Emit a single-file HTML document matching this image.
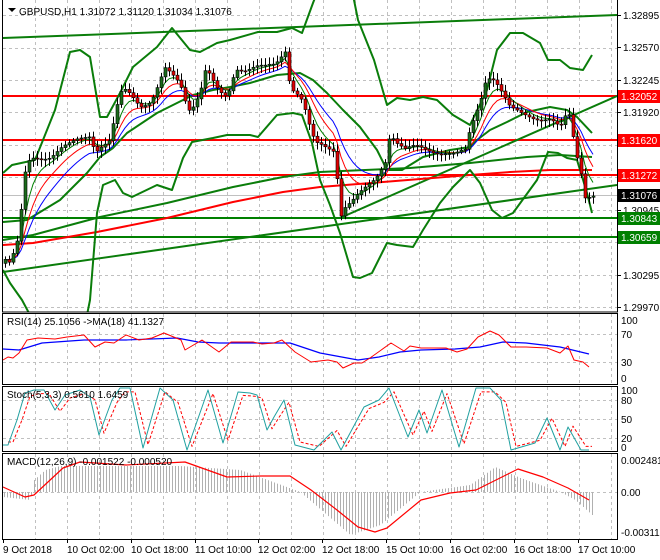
<!DOCTYPE html>
<html><head><meta charset="utf-8"><style>
body{margin:0;background:#fff;width:660px;height:560px;overflow:hidden}
svg{display:block;font-family:"Liberation Sans",sans-serif;font-size:10px}
</style></head><body>
<svg id="s" width="660" height="560" xmlns="http://www.w3.org/2000/svg">
<rect width="660" height="560" fill="#fff"/>
<g id="grid" stroke="#c0c0c0" stroke-dasharray="3,3" stroke-width="1"></g>
<svg x="0" y="0" width="617" height="312" overflow="hidden"><g id="main"></g></svg>
<g id="sub"></g>
<g fill="none" stroke="#000" stroke-width="1">
<rect x="2.5" y="-1" width="615" height="313"/>
<rect x="2.5" y="313.5" width="615" height="71"/>
<rect x="2.5" y="386.5" width="615" height="65"/>
<rect x="2.5" y="453.5" width="615" height="86"/>
</g>
<g id="axis" fill="#000"></g>
<path d="M8 8 L16 8 L12 12 Z" fill="#000"/>
<text x="19" y="15" fill="#000">GBPUSD,H1  1.31072 1.31120 1.31034 1.31076</text>
<text x="7" y="325" fill="#000">RSI(14) 25.1056  -&gt;MA(18) 41.1327</text>
<text x="7" y="398" fill="#000">Stoch(5,3,3) 0.5610 1.6459</text>
<text x="7" y="465" fill="#000">MACD(12,26,9) -0.001522 -0.000520</text>
</svg>
<script>
var NS="http://www.w3.org/2000/svg";
function el(p,t,a,txt){var e=document.createElementNS(NS,t);for(var k in a)e.setAttribute(k,a[k]);if(txt!=null)e.textContent=txt;p.appendChild(e);return e;}
var G=document.getElementById('grid'),M=document.getElementById('main'),U=document.getElementById('sub'),A=document.getElementById('axis');
for(var x=35;x<617;x+=32){[[0,312],[314,384],[387,451],[454,539]].forEach(function(r){el(G,'line',{x1:x+.5,x2:x+.5,y1:r[0],y2:r[1]});});}
[15,47.5,80,112,145,177,210,242,275,307].forEach(function(y){el(G,'line',{x1:3,x2:617,y1:Math.round(y)+.5,y2:Math.round(y)+.5});});
[334,362,400,419,438,492].forEach(function(y){el(G,'line',{x1:3,x2:617,y1:y+.5,y2:y+.5});});
function pl(p,pts,c,w,extra){var a={points:pts.map(function(q){return q.join(',')}).join(' '),fill:'none',stroke:c,'stroke-width':w,'stroke-linejoin':'round'};for(var k in extra)a[k]=extra[k];return el(p,'polyline',a);}
var P=[[3,255],[10,262],[18,240],[25,175],[30,160],[40,158],[50,155],[60,148],[70,145],[80,140],[90,135],[95,150],[100,145],[110,140],[115,115],[120,95],[125,92],[130,95],[140,105],[150,100],[155,92],[160,80],[165,70],[170,75],[175,80],[180,85],[185,100],[190,110],[195,100],[200,90],[205,70],[210,75],[215,88],[220,95],[225,98],[230,90],[235,68],[245,68],[255,66],[265,68],[275,66],[285,50],[290,85],[295,90],[300,95],[305,110],[310,130],[315,145],[325,148],[335,150],[340,215],[345,205],[355,198],[365,190],[375,180],[385,160],[390,130],[395,140],[405,150],[415,148],[430,150],[445,152],[455,155],[465,152],[470,130],[475,115],[480,100],[485,80],[490,75],[495,80],[500,90],[510,110],[520,113],[530,115],[540,118],[550,120],[560,130],[565,118],[570,115],[575,150],[580,165],[585,195],[590,195]];
function interp(pts,x){for(var i=1;i<pts.length;i++){if(x<=pts[i][0]){var a=pts[i-1],b=pts[i];return a[1]+(b[1]-a[1])*(x-a[0])/(b[0]-a[0]);}}return pts[pts.length-1][1];}
el(M,'line',{x1:3,x2:617,y1:195.5,y2:195.5,stroke:'#c0c0c0','stroke-width':1});
[96,140,175].forEach(function(y){el(M,'line',{x1:3,x2:617,y1:y,y2:y,stroke:'#ff0000','stroke-width':2});});
[218,237].forEach(function(y){el(M,'line',{x1:3,x2:617,y1:y,y2:y,stroke:'#008000','stroke-width':2});});
var g='#0a7d0a';
el(M,'line',{x1:3,x2:617,y1:38,y2:15,stroke:g,'stroke-width':2});
el(M,'line',{x1:3,x2:617,y1:272,y2:185,stroke:g,'stroke-width':2});
el(M,'line',{x1:340,x2:617,y1:218,y2:96,stroke:g,'stroke-width':2});
pl(M,[[3,240],[33,235],[100,217],[167,203],[233,187],[283,177],[320,172],[410,168],[470,163],[527,157],[560,155],[592,157]],g,2);
pl(M,[[3,245],[33,243],[97,232],[167,218],[233,202],[283,192],[320,187],[383,182],[470,175],[510,172],[550,170],[592,170]],'#ff0000',2);
pl(M,[[3,173],[12,165],[35,160],[55,110],[70,52],[80,50],[90,57],[100,117],[107,117],[120,93],[133,67],[157,47],[172,28],[190,50],[200,52],[217,43],[230,40],[258,32],[277,32],[292,28],[302,33],[313,3],[320,-15],[340,-25],[352,-10],[358,20],[374,60],[387,105],[397,98],[410,100],[423,97],[437,100],[453,115],[470,125],[487,90],[497,50],[510,33],[523,33],[540,43],[548,60],[560,60],[570,68],[583,70],[592,55]],g,2);
pl(M,[[3,222],[27,220],[60,200],[87,173],[100,157],[113,148],[127,133],[157,113],[177,103],[193,95],[213,90],[230,87],[250,83],[277,75],[300,73],[313,80],[327,93],[343,110],[360,127],[377,150],[387,170],[402,170],[423,157],[450,150],[470,147],[477,140],[490,130],[507,122],[527,112],[550,107],[567,110],[577,117],[592,133]],g,2);
pl(M,[[3,270],[10,283],[22,300],[30,315]],g,2);
pl(M,[[86,320],[90,300],[97,213],[103,185],[115,180],[123,193],[132,197],[157,185],[172,190],[183,158],[192,142],[213,138],[227,135],[250,135],[258,137],[277,115],[293,113],[302,115],[312,143],[320,180],[330,205],[340,233],[353,277],[360,278],[372,273],[387,243],[397,245],[413,247],[423,230],[440,203],[453,187],[470,170],[480,183],[492,210],[502,218],[513,213],[537,180],[548,152],[558,153],[567,158],[577,160],[587,193],[592,213]],g,2);
var closes=[],xs=[];for(var x=5;x<=593;x+=4){xs.push(x);closes.push(interp(P,x)+Math.sin(x*1.7)*3);}
function ema(n){var k=2/(n+1),r=[],v=closes[0];closes.forEach(function(c){v=v+k*(c-v);r.push([xs[r.length],v]);});return r;}
pl(M,ema(14),'#0000ff',1);pl(M,ema(9),'#ff0000',1);pl(M,ema(5),'#008000',1);
var prev=closes[0]+4;
xs.forEach(function(x,i){var c=closes[i],o=prev;prev=c;var top=Math.min(o,c),bot=Math.max(o,c);if(bot-top<1)bot=top+1;
 var h=top-2-Math.abs(Math.sin(x*3.1))*5,l=bot+2+Math.abs(Math.cos(x*2.3))*5;
 el(M,'line',{x1:x+.5,x2:x+.5,y1:h,y2:l,stroke:'#000','stroke-width':1});
 el(M,'rect',{x:x-1,y:top,width:3,height:bot-top,fill:c<o?'#1a6b1a':'#e00000',stroke:'#000','stroke-width':.6});});
[[15,'1.32895'],[47,'1.32570'],[80,'1.32245'],[112,'1.31920'],[210,'1.30945'],[275,'1.30295'],[307,'1.29970']].forEach(function(a){el(A,'line',{x1:617,x2:621,y1:a[0]+.5,y2:a[0]+.5,stroke:'#000'});el(A,'text',{x:623,y:a[0]+4},a[1]);});
[[96,'1.32052','#ff0000'],[140,'1.31620','#ff0000'],[175,'1.31272','#ff0000'],[195,'1.31076','#000'],[218,'1.30843','#008000'],[237,'1.30659','#008000']].forEach(function(a){el(A,'rect',{x:618,y:a[0]-6,width:42,height:13,fill:a[2]});el(A,'text',{x:621,y:a[0]+4,fill:'#fff'},a[1]);});
[[320,'100'],[334,'70'],[362,'30'],[378,'0'],[390,'100'],[400,'80'],[419,'50'],[438,'20'],[447,'0'],[460,'0.002481'],[492,'0.00'],[532,'-0.003115']].forEach(function(a){el(A,'text',{x:621,y:a[0]+4},a[1]);});
pl(U,[[3,349],[19,350],[42,343],[84,340],[126,340],[177,338],[198,342],[219,343],[253,343],[290,343],[320,353],[358,360],[379,357],[400,352],[421,350],[455,349],[480,347],[503,342],[526,343],[560,347],[589,354]],'#0000ff',1.2);
pl(U,[[3,360],[8,357],[13,358],[19,353],[27,340],[38,338],[55,339],[67,337],[84,335],[95,347],[105,342],[114,343],[126,335],[139,340],[152,338],[164,333],[181,340],[185,350],[202,340],[219,352],[231,342],[253,342],[262,344],[274,343],[282,340],[295,352],[311,362],[328,360],[337,362],[343,368],[354,363],[362,363],[370,358],[391,343],[404,351],[410,346],[421,348],[446,348],[457,352],[467,349],[478,337],[490,331],[499,335],[511,347],[526,347],[547,348],[560,353],[568,346],[574,360],[583,362],[589,367]],'#ff0000',1);
var st=[[3,445],[8,445],[17,420],[25,393],[34,390],[44,390],[55,410],[65,395],[80,390],[90,397],[99,435],[112,400],[120,388],[130,388],[143,448],[160,388],[173,400],[187,450],[208,390],[223,443],[238,392],[250,393],[257,395],[267,430],[274,417],[284,400],[295,445],[314,450],[332,432],[341,450],[364,407],[379,400],[389,388],[408,437],[419,410],[427,433],[442,390],[459,447],[476,388],[490,388],[501,400],[511,450],[535,443],[547,418],[560,450],[568,427],[581,450],[589,450]];
pl(U,st.map(function(p){return [Math.min(p[0]+5,592),p[1]+(420-p[1])*0.12];}),'#ff0000',1,{'stroke-dasharray':'3,2'});
pl(U,st,'#20a0a0',1);
var H=[[3,497],[30,500],[34,480],[45,470],[60,466],[180,466],[240,470],[300,492],[350,535],[380,525],[420,492],[470,485],[495,467],[520,478],[560,492],[575,500],[592,515]];
for(var x=4;x<=592;x+=3){var v=interp(H,x);el(U,'line',{x1:x+.5,x2:x+.5,y1:492,y2:v,stroke:'#b0b0b0','stroke-width':1});}
pl(U,[[3,487],[25,497],[34,495],[63,468],[80,462],[126,465],[185,462],[227,477],[261,476],[290,476],[311,490],[337,510],[358,527],[375,532],[387,528],[421,500],[450,493],[476,490],[518,469],[543,477],[568,488],[589,500]],'#ff0000',1.2);
[[3,'9 Oct 2018'],[67,'10 Oct 02:00'],[131,'10 Oct 18:00'],[195,'11 Oct 10:00'],[258,'12 Oct 02:00'],[322,'12 Oct 18:00'],[386,'15 Oct 10:00'],[450,'16 Oct 02:00'],[514,'16 Oct 18:00'],[578,'17 Oct 10:00']].forEach(function(a){el(A,'line',{x1:a[0]+.5,x2:a[0]+.5,y1:539,y2:543,stroke:'#000'});el(A,'text',{x:a[0],y:553},a[1]);});
</script>
</body></html>
